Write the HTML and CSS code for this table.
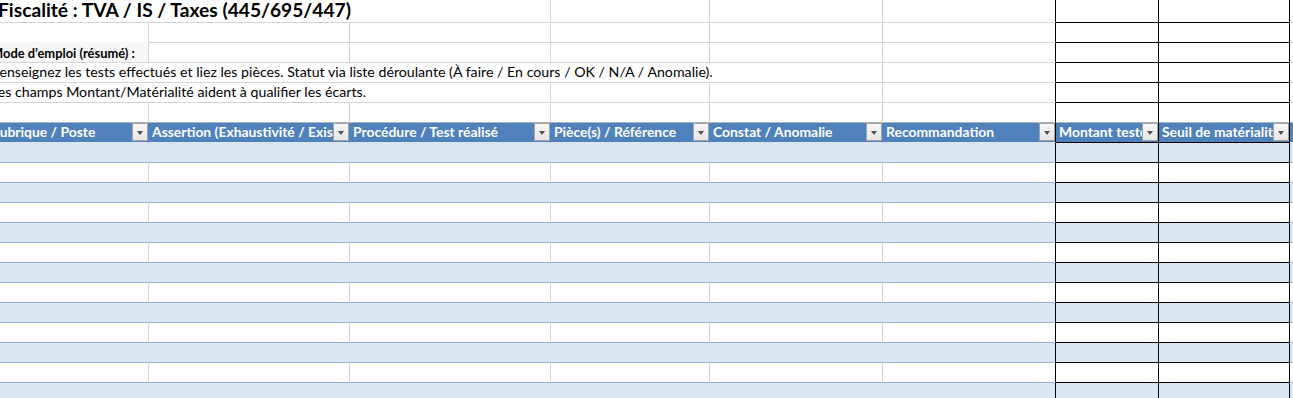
FILE: index.html
```html
<!DOCTYPE html>
<html lang="fr">
<head>
<meta charset="utf-8">
<title>Fiscalité</title>
<link rel="stylesheet" href="styles.css">
</head>
<body>
<div class="sheet">
  <div class="grid">
    <div class="row r1">
      <div class="c a nob"><span class="title">Fiscalité : TVA / IS / Taxes (445/695/447)</span></div>
      <div class="c b nob"></div><div class="c cc"></div><div class="c d"></div><div class="c e"></div><div class="c f"></div><div class="c g"></div><div class="c h"></div><div class="c i"></div>
    </div>
    <div class="row">
      <div class="c a fillb"></div><div class="c b"></div><div class="c cc"></div><div class="c d"></div><div class="c e"></div><div class="c f"></div><div class="c g"></div><div class="c h"></div><div class="c i"></div>
    </div>
    <div class="row">
      <div class="c a fill"><span class="mode">Mode d’emploi (résumé) :</span></div>
      <div class="c b"></div><div class="c cc"></div><div class="c d"></div><div class="c e"></div><div class="c f"></div><div class="c g"></div><div class="c h"></div><div class="c i"></div>
    </div>
    <div class="row">
      <div class="c a nob"><span class="txt">Renseignez les tests effectués et liez les pièces. Statut via liste déroulante (À faire / En cours / OK / N/A / Anomalie).</span></div>
      <div class="c b nob"></div><div class="c cc nob"></div><div class="c d nob"></div><div class="c e"></div><div class="c f"></div><div class="c g"></div><div class="c h"></div><div class="c i"></div>
    </div>
    <div class="row">
      <div class="c a nob"><span class="txt">Les champs Montant/Matérialité aident à qualifier les écarts.</span></div>
      <div class="c b nob"></div><div class="c cc"></div><div class="c d"></div><div class="c e"></div><div class="c f"></div><div class="c g"></div><div class="c h"></div><div class="c i"></div>
    </div>
    <div class="row r6">
      <div class="c a"></div><div class="c b"></div><div class="c cc"></div><div class="c d"></div><div class="c e"></div><div class="c f"></div><div class="c g"></div><div class="c h"></div><div class="c i"></div>
    </div>
    <div class="row hdr">
      <div class="c a"><span class="ht">Rubrique / Poste</span><span class="fb"></span></div>
      <div class="c b"><span class="ht">Assertion (Exhaustivité / Existence)</span><span class="fb"></span></div>
      <div class="c cc"><span class="ht">Procédure / Test réalisé</span><span class="fb"></span></div>
      <div class="c d"><span class="ht">Pièce(s) / Référence</span><span class="fb"></span></div>
      <div class="c e"><span class="ht">Constat / Anomalie</span><span class="fb"></span></div>
      <div class="c f"><span class="ht">Recommandation</span><span class="fb"></span></div>
      <div class="c g"><span class="ht">Montant testé</span><span class="fb"></span></div>
      <div class="c h"><span class="ht">Seuil de matérialité</span><span class="fb"></span></div>
      <div class="c i"></div>
    </div>
    <div class="row data band"><div class="c a"></div><div class="c b"></div><div class="c cc"></div><div class="c d"></div><div class="c e"></div><div class="c f"></div><div class="c g"></div><div class="c h"></div><div class="c i"></div></div>
    <div class="row data"><div class="c a"></div><div class="c b"></div><div class="c cc"></div><div class="c d"></div><div class="c e"></div><div class="c f"></div><div class="c g"></div><div class="c h"></div><div class="c i"></div></div>
    <div class="row data band"><div class="c a"></div><div class="c b"></div><div class="c cc"></div><div class="c d"></div><div class="c e"></div><div class="c f"></div><div class="c g"></div><div class="c h"></div><div class="c i"></div></div>
    <div class="row data"><div class="c a"></div><div class="c b"></div><div class="c cc"></div><div class="c d"></div><div class="c e"></div><div class="c f"></div><div class="c g"></div><div class="c h"></div><div class="c i"></div></div>
    <div class="row data band"><div class="c a"></div><div class="c b"></div><div class="c cc"></div><div class="c d"></div><div class="c e"></div><div class="c f"></div><div class="c g"></div><div class="c h"></div><div class="c i"></div></div>
    <div class="row data"><div class="c a"></div><div class="c b"></div><div class="c cc"></div><div class="c d"></div><div class="c e"></div><div class="c f"></div><div class="c g"></div><div class="c h"></div><div class="c i"></div></div>
    <div class="row data band"><div class="c a"></div><div class="c b"></div><div class="c cc"></div><div class="c d"></div><div class="c e"></div><div class="c f"></div><div class="c g"></div><div class="c h"></div><div class="c i"></div></div>
    <div class="row data"><div class="c a"></div><div class="c b"></div><div class="c cc"></div><div class="c d"></div><div class="c e"></div><div class="c f"></div><div class="c g"></div><div class="c h"></div><div class="c i"></div></div>
    <div class="row data band"><div class="c a"></div><div class="c b"></div><div class="c cc"></div><div class="c d"></div><div class="c e"></div><div class="c f"></div><div class="c g"></div><div class="c h"></div><div class="c i"></div></div>
    <div class="row data"><div class="c a"></div><div class="c b"></div><div class="c cc"></div><div class="c d"></div><div class="c e"></div><div class="c f"></div><div class="c g"></div><div class="c h"></div><div class="c i"></div></div>
    <div class="row data band"><div class="c a"></div><div class="c b"></div><div class="c cc"></div><div class="c d"></div><div class="c e"></div><div class="c f"></div><div class="c g"></div><div class="c h"></div><div class="c i"></div></div>
    <div class="row data"><div class="c a"></div><div class="c b"></div><div class="c cc"></div><div class="c d"></div><div class="c e"></div><div class="c f"></div><div class="c g"></div><div class="c h"></div><div class="c i"></div></div>
    <div class="row data band"><div class="c a"></div><div class="c b"></div><div class="c cc"></div><div class="c d"></div><div class="c e"></div><div class="c f"></div><div class="c g"></div><div class="c h"></div><div class="c i"></div></div>
  </div>
</div>
</body>
</html>
```
FILE: styles.css
```css
html, body {
  margin: 0;
  padding: 0;
  background: #ffffff;
}

.sheet {
  width: 1293px;
  height: 398px;
  overflow: hidden;
  font-family: Lato, "Open Sans", "Liberation Sans", sans-serif;
  color: #000000;
}

.grid {
  margin-left: -12px;
  width: 1340px;
}

.row {
  display: flex;
  height: 20px;
}

.row.r1 {
  height: 23px;
}

.c {
  box-sizing: border-box;
  flex: none;
  height: 100%;
  position: relative;
  white-space: nowrap;
  border-right: 1px solid #d4d4d4;
  border-bottom: 1px solid #d4d4d4;
}

.a { width: 161px; }
.b { width: 201px; }
.cc { width: 201px; }
.d { width: 159px; }
.e { width: 173px; }
.f { width: 173px; border-right-color: #000000; }
.g { width: 103px; border-right-color: #000000; border-bottom-color: #000000; }
.h { width: 131px; border-right-color: #000000; border-bottom-color: #000000; }
.i { width: 40px; border-right: none; }

.c.nob { border-right-color: transparent; }

.c.fill { background: #f7f7f7; }
.c.fillb { border-bottom-color: #f7f7f7; }

.r6 .c { border-bottom-color: #a9b1bc; }

.title {
  display: block;
  padding-left: 10px;
  font-size: 19.2px;
  font-weight: 700;
  line-height: 19px;
}

.mode {
  display: block;
  padding-left: 3px;
  font-size: 12.9px;
  font-weight: 700;
  line-height: 21px;
}

.txt {
  display: block;
  padding-left: 3px;
  font-size: 14.2px;
  line-height: 17px;
}

/* header */
.hdr .c {
  background: #4f81bd;
  border-right-color: #4f81bd;
  border-bottom-color: #dce6f1;
  overflow: hidden;
}

.hdr .f,
.hdr .g,
.hdr .h {
  border-right-color: #000000;
}

.hdr .g,
.hdr .h {
  border-bottom-color: #000000;
}

.ht {
  display: block;
  padding-left: 3px;
  font-size: 13.9px;
  font-weight: 700;
  line-height: 18px;
  color: #ffffff;
  overflow: hidden;
}

.fb {
  position: absolute;
  right: 0;
  top: 0;
  width: 16px;
  height: 18px;
  box-sizing: border-box;
  border: 1px solid #a3a3a3;
  background: linear-gradient(#f7f7f7, #e6e6e6);
}

.fb::after {
  content: "";
  position: absolute;
  left: 4px;
  top: 7px;
  width: 0;
  height: 0;
  border-left: 3.5px solid transparent;
  border-right: 3.5px solid transparent;
  border-top: 4px solid #4d4d4d;
}

/* data rows */
.data .c {
  border-bottom-color: #95b3d7;
}

.data .g,
.data .h {
  border-bottom-color: #000000;
}

.data.band .c {
  background: #dce6f1;
}

.data.band .a,
.data.band .b,
.data.band .cc,
.data.band .d,
.data.band .e {
  border-right-color: #dce6f1;
}
```
